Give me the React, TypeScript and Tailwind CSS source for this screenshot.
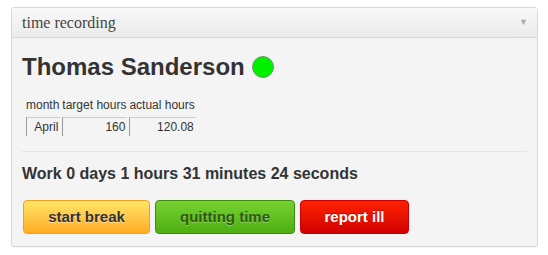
import React from "react"

export default function App() {
  return (
    <div className="w-[548px] h-[255px] bg-white pt-[7px] pl-[11px] font-['Liberation_Sans',Arial,sans-serif]">
      {/* Panel */}
      <div className="w-[527px] rounded-[3px] border border-[#d8d8d8] bg-[#f4f4f4] shadow-[0_1px_1px_rgba(0,0,0,0.04)]">
        {/* Header */}
        <div className="flex h-[30px] items-center justify-between border-b border-[#d8d8d8] bg-gradient-to-b from-[#f9f9f9] to-[#ebebeb] pl-[10px] pr-[9px]">
          <span className="font-['Liberation_Serif','Times_New_Roman',serif] text-[16px] text-[#444]">time recording</span>
          <span className="text-[9px] text-[#aaa]">▼</span>
        </div>

        {/* Body */}
        <div className="px-[10px] pt-[14px] pb-[12px]">
          <div className="flex items-center gap-[7px]">
            <h1 className="text-[24px] font-bold leading-[30px] text-[#333]">Thomas Sanderson</h1>
            <span className="inline-block h-[22px] w-[22px] rounded-full border border-[#6a9a6a] bg-[#00f000]" />
          </div>

          {/* Hours table */}
          <table className="mt-[14px] ml-[2px] border-separate border-spacing-x-[2px] border-spacing-y-0 text-[12px] text-[#333]">
            <thead>
              <tr>
                <th className="pl-0 pr-[1px] pb-[3px] text-left font-normal">month</th>
                <th className="pl-0 pr-[1px] pb-[3px] text-left font-normal">target hours</th>
                <th className="pl-0 pr-[1px] pb-[3px] text-left font-normal">actual hours</th>
              </tr>
            </thead>
            <tbody>
              <tr>
                <td className="h-[19px] border-t border-l border-[#999] border-t-[#ccc] pr-[2px] text-right leading-[17px]">April</td>
                <td className="h-[19px] border-t border-l border-[#999] border-t-[#ccc] pr-[2px] text-right leading-[17px]">160</td>
                <td className="h-[19px] border-t border-l border-[#999] border-t-[#ccc] pr-[2px] text-right leading-[17px]">120.08</td>
              </tr>
            </tbody>
          </table>

          <div className="mt-[15px] border-t border-[#e4e4e4]" />

          <div className="mt-[12px] text-[16px] font-bold leading-[20px] text-[#333]">
            Work 0 days 1 hours 31 minutes 24 seconds
          </div>

          {/* Actions */}
          <div className="mt-[16px] flex gap-[5px] pl-[1px]">
            <button className="h-[34px] w-[127px] rounded-[4px] border border-[#f0a020] bg-gradient-to-b from-[#ffe566] to-[#ffab20] text-[15px] font-bold text-[#333] [text-shadow:0_1px_0_rgba(255,255,255,0.5)]">
              start break
            </button>
            <button className="h-[34px] w-[140px] rounded-[4px] border border-[#3f8a10] bg-gradient-to-b from-[#76d230] to-[#4eae10] text-[15px] font-bold text-[#2f5a10] [text-shadow:0_1px_0_rgba(255,255,255,0.35)]">
              quitting time
            </button>
            <button className="h-[34px] w-[109px] rounded-[4px] border border-[#cc0000] bg-gradient-to-b from-[#ff2000] to-[#d00000] text-[15px] font-bold text-white [text-shadow:0_-1px_0_rgba(0,0,0,0.3)]">
              report ill
            </button>
          </div>
        </div>
      </div>
    </div>
  )
}
